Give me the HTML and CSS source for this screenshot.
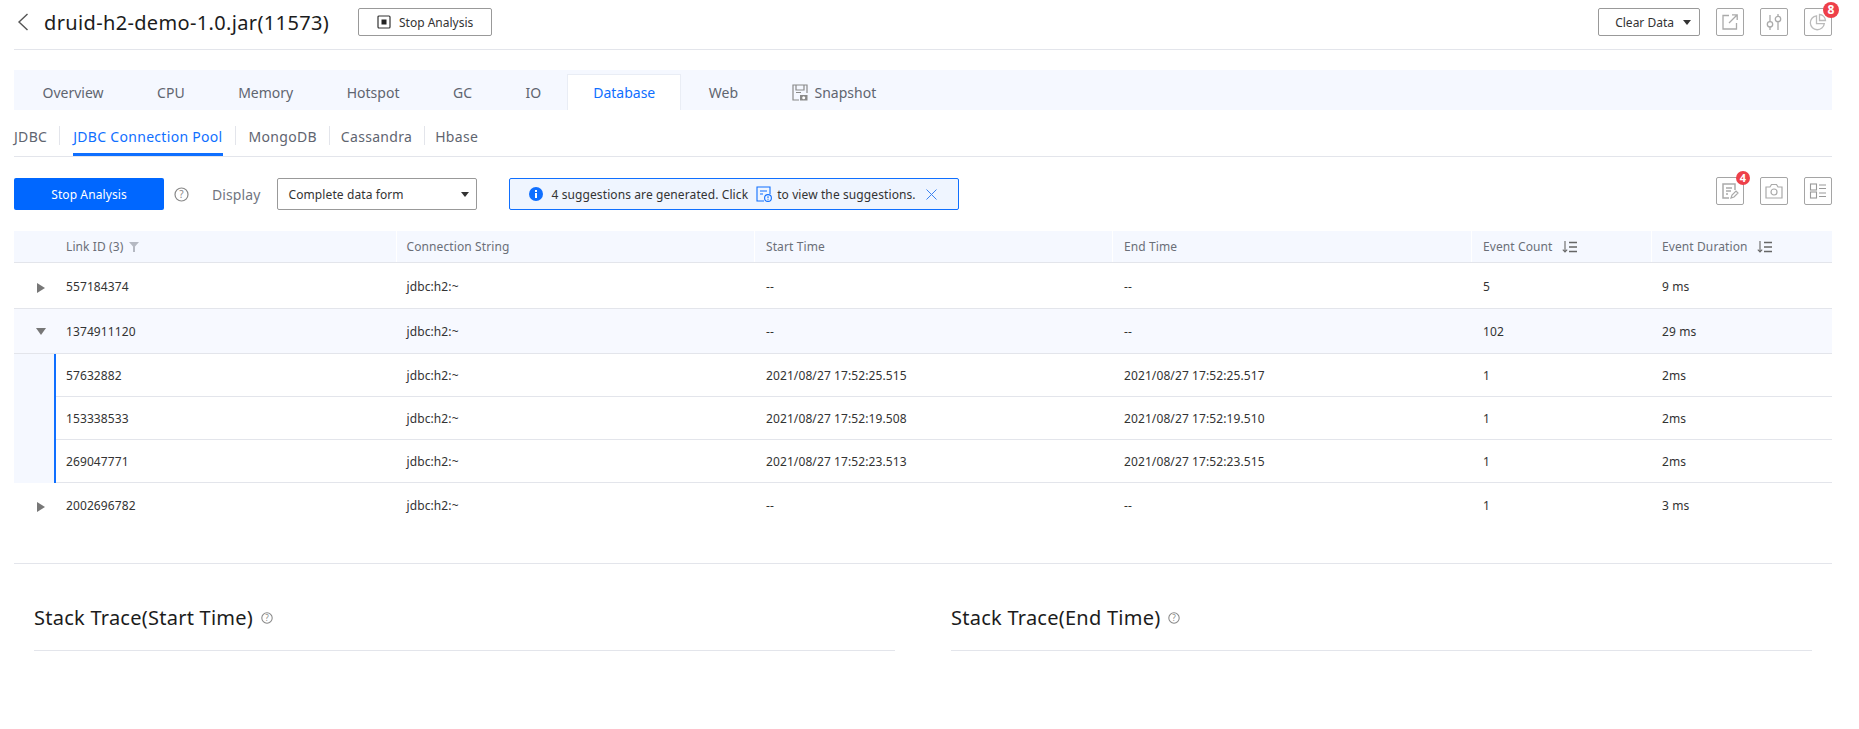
FILE: index.html
```html
<!DOCTYPE html>
<html>
<head>
    <title>druid-h2-demo-1.0.jar(11573)</title>
    <link rel="stylesheet" href="styles.css">
</head>
<body>
    <header class="page-head">
        <svg class="back" width="12" height="18" viewBox="0 0 12 18"><path d="M10.5 1 2 9l8.500 8" fill="none" stroke="#555" stroke-width="1.400"/></svg>
        <h1 class="title">druid-h2-demo-1.0.jar(11573)</h1>
        <button class="btn stop-top">
            <svg width="14" height="14" viewBox="0 0 14 14"><rect x="1" y="1" width="12" height="12" rx="1" fill="none" stroke="#333" stroke-width="1.200"/><rect x="4.500" y="4.500" width="5" height="5" fill="#222"/></svg>
            Stop Analysis
        </button>
        <div class="head-right">
            <button class="btn clear">Clear Data <span class="caret"></span></button>
            <span class="icon-btn">
                <svg width="20" height="20" viewBox="0 0 20 20" fill="none" stroke="#aaa" stroke-width="1.300"><path d="M9 3.500H3v13.500h13.500v-6"/><path d="M9 11 17 3M12 2.800h5.200V8"/></svg>
            </span>
            <span class="icon-btn">
                <svg width="20" height="20" viewBox="0 0 20 20" fill="none" stroke="#aaa" stroke-width="1.300"><path d="M6 3v6.500M6 15v3M14 2v2M14 10v8"/><circle cx="6" cy="12.300" r="2.700"/><circle cx="14" cy="7" r="2.700"/></svg>
            </span>
            <span class="icon-btn">
                <svg width="20" height="20" viewBox="0 0 20 20" fill="none" stroke="#bbb" stroke-width="1.300"><path d="M8.500 3.800a7 7 0 1 0 7.800 7.800H8.500z"/><path d="M11.500 2.500a6.500 6.500 0 0 1 6 6h-6z"/></svg>
                <span class="badge big">8</span>
            </span>
        </div>
    </header>

    <nav class="tabs">
        <a class="tab">Overview</a>
        <a class="tab">CPU</a>
        <a class="tab">Memory</a>
        <a class="tab">Hotspot</a>
        <a class="tab">GC</a>
        <a class="tab">IO</a>
        <a class="tab active">Database</a>
        <a class="tab">Web</a>
        <a class="tab snapshot">
            <svg width="16" height="17" viewBox="0 0 16 17" fill="none" stroke="#8a8a8a" stroke-width="1.200"><path d="M7 16H1V1h14v8"/><path d="M4 1v5h8V1M4 8.500h5"/><rect x="8" y="11" width="7.500" height="5.500" fill="#8a8a8a" stroke="none"/><circle cx="11.700" cy="13.700" r="1.500" fill="#fff" stroke="none"/></svg>
            Snapshot
        </a>
    </nav>

    <nav class="subtabs">
        <a class="subtab">JDBC</a>
        <a class="subtab active">JDBC Connection Pool</a>
        <a class="subtab">MongoDB</a>
        <a class="subtab">Cassandra</a>
        <a class="subtab">Hbase</a>
    </nav>

    <div class="toolbar">
        <button class="btn-primary">Stop Analysis</button>
        <svg class="help" width="15" height="15" viewBox="0 0 15 15"><circle cx="7.500" cy="7.500" r="6.500" fill="none" stroke="#888" stroke-width="1.200"/><text x="7.500" y="11" text-anchor="middle" class="help-mark">?</text></svg>
        <span class="display-label">Display</span>
        <div class="select">Complete data form <span class="caret"></span></div>
        <div class="alert">
            <svg width="14" height="14" viewBox="0 0 14 14"><circle cx="7" cy="7" r="7" fill="#0f6fff"/><rect x="6" y="6" width="2" height="5" fill="#fff"/><rect x="6" y="3" width="2" height="2" fill="#fff"/></svg>
            <span class="alert-lead">4 suggestions are generated. Click</span>
            <svg class="alert-icon" width="16" height="16" viewBox="0 0 16 16" fill="none" stroke="#0f6fff" stroke-width="1.100"><path d="M8 15H1V1h13v7"/><path d="M4 5h7M4 8h3"/><circle cx="12" cy="12" r="3.400" fill="#eff5ff"/><path d="M12 10.300v2M12 13v.8"/></svg>
            <span>to view the suggestions.</span>
            <svg class="alert-close" width="11" height="11" viewBox="0 0 11 11" fill="none" stroke="#3b82f0" stroke-width="1"><path d="M.5.500l10 10M10.500.500l-10 10"/></svg>
        </div>
        <div class="tool-right">
            <span class="icon-btn">
                <svg width="20" height="20" viewBox="0 0 20 20" fill="none" stroke="#aaa" stroke-width="1.500"><path d="M9 17H3V3h12v6"/><path d="M6 7h6M6 10h5M6 13h2"/><path d="M11 17l1-3 4-4 2 2-4 4z" stroke-width="1.200"/></svg>
                <span class="badge">4</span>
            </span>
            <span class="icon-btn">
                <svg width="20" height="20" viewBox="0 0 20 20" fill="none" stroke="#aaa" stroke-width="1.200"><path d="M2 6h4l1.500-2.500h5L14 6h4v11H2z"/><circle cx="10" cy="11" r="3"/></svg>
            </span>
            <span class="icon-btn">
                <svg width="20" height="20" viewBox="0 0 20 20" fill="none" stroke="#999" stroke-width="1.100"><rect x="2.500" y="3" width="6" height="6"/><rect x="2.500" y="11" width="6" height="6"/><path d="M11 4h7M11 7.500h7M11 12h7M11 15.500h7"/></svg>
            </span>
        </div>
    </div>

    <div class="table">
        <div class="row head">
            <div class="cell first">Link ID (3)
                <svg class="filter" width="10" height="10" viewBox="0 0 10 10"><path d="M0 0h10L6 4.500V10H4V4.500z" fill="#b5b9c2"/></svg>
            </div>
            <div class="cell">Connection String</div>
            <div class="cell">Start Time</div>
            <div class="cell">End Time</div>
            <div class="cell">Event Count
                <svg class="sort" width="15" height="12" viewBox="0 0 15 12" fill="none" stroke="#666" stroke-width="1.500"><path d="M3 0v11M.8 8.600 3 11l2.200-2.400" stroke-width="1.100"/><path d="M7 1.500h8M7 6h8M7 10.500h8"/></svg>
            </div>
            <div class="cell">Event Duration
                <svg class="sort" width="15" height="12" viewBox="0 0 15 12" fill="none" stroke="#666" stroke-width="1.500"><path d="M3 0v11M.8 8.600 3 11l2.200-2.400" stroke-width="1.100"/><path d="M7 1.500h8M7 6h8M7 10.500h8"/></svg>
            </div>
        </div>

        <div class="row item top-row">
            <div class="cell first"><span class="arrow right"></span>557184374</div>
            <div class="cell">jdbc:h2:~</div>
            <div class="cell">--</div>
            <div class="cell">--</div>
            <div class="cell">5</div>
            <div class="cell">9 ms</div>
        </div>
        <div class="row item open">
            <div class="cell first"><span class="arrow down"></span>1374911120</div>
            <div class="cell">jdbc:h2:~</div>
            <div class="cell">--</div>
            <div class="cell">--</div>
            <div class="cell">102</div>
            <div class="cell">29 ms</div>
        </div>

        <div class="children">
            <div class="child-rows">
                <div class="row child">
                    <div class="cell">57632882</div>
                    <div class="cell">jdbc:h2:~</div>
                    <div class="cell">2021/08/27 17:52:25.515</div>
                    <div class="cell">2021/08/27 17:52:25.517</div>
                    <div class="cell">1</div>
                    <div class="cell">2ms</div>
                </div>
                <div class="row child">
                    <div class="cell">153338533</div>
                    <div class="cell">jdbc:h2:~</div>
                    <div class="cell">2021/08/27 17:52:19.508</div>
                    <div class="cell">2021/08/27 17:52:19.510</div>
                    <div class="cell">1</div>
                    <div class="cell">2ms</div>
                </div>
                <div class="row child">
                    <div class="cell">269047771</div>
                    <div class="cell">jdbc:h2:~</div>
                    <div class="cell">2021/08/27 17:52:23.513</div>
                    <div class="cell">2021/08/27 17:52:23.515</div>
                    <div class="cell">1</div>
                    <div class="cell">2ms</div>
                </div>
            </div>
        </div>

        <div class="row item last">
            <div class="cell first"><span class="arrow right"></span>2002696782</div>
            <div class="cell">jdbc:h2:~</div>
            <div class="cell">--</div>
            <div class="cell">--</div>
            <div class="cell">1</div>
            <div class="cell">3 ms</div>
        </div>
    </div>

    <div class="stacks">
        <section class="stack">
            <h2>Stack Trace(Start Time)
                <svg width="12" height="12" viewBox="0 0 15 15"><circle cx="7.500" cy="7.500" r="6.500" fill="none" stroke="#888" stroke-width="1.300"/><text x="7.500" y="11" text-anchor="middle" class="help-mark">?</text></svg>
            </h2>
        </section>
        <section class="stack">
            <h2>Stack Trace(End Time)
                <svg width="12" height="12" viewBox="0 0 15 15"><circle cx="7.500" cy="7.500" r="6.500" fill="none" stroke="#888" stroke-width="1.300"/><text x="7.500" y="11" text-anchor="middle" class="help-mark">?</text></svg>
            </h2>
        </section>
    </div>
</body>
</html>
```

FILE: styles.css
```css
body {
    margin: 0;
    padding: 0 27px 0 14px;
    font-family: "Noto Sans", "Open Sans", sans-serif;
    font-size: 12px;
    color: #333;
    background: #fff;
}

button {
    font-family: inherit;
}

.page-head {
    display: flex;
    align-items: center;
    height: 50px;
    padding-bottom: 5px;
    box-sizing: border-box;
    border-bottom: 1px solid #e3e5eb;
}

.back {
    margin-left: 3px;
}

.title {
    margin: 0 0 0 15px;
    font-size: 20px;
    font-weight: 400;
    letter-spacing: 0.35px;
    color: #1c1c1c;
}

.btn {
    display: flex;
    align-items: center;
    height: 28px;
    padding: 0;
    border: 1px solid #999;
    border-radius: 2px;
    background: #fff;
    font-size: 12px;
    color: #333;
}

.stop-top {
    justify-content: center;
    gap: 8px;
    width: 134px;
    margin-left: 29px;
}

.head-right {
    display: flex;
    align-items: center;
    gap: 16px;
    margin-left: auto;
}

.clear {
    justify-content: flex-end;
    gap: 9px;
    width: 102px;
    padding-right: 8px;
    box-sizing: border-box;
}

.caret {
    width: 0;
    height: 0;
    border-left: 4px solid transparent;
    border-right: 4px solid transparent;
    border-top: 5px solid #333;
}

.icon-btn {
    position: relative;
    display: flex;
    align-items: center;
    justify-content: center;
    width: 28px;
    height: 28px;
    box-sizing: border-box;
    border: 1px solid #a5a5a5;
    border-radius: 2px;
}

.badge {
    position: absolute;
    top: -7px;
    right: -7px;
    width: 14px;
    height: 14px;
    border-radius: 50%;
    background: #ee4049;
    color: #fff;
    font-size: 11px;
    font-weight: 700;
    line-height: 14px;
    text-align: center;
}

.badge.big {
    width: 16px;
    height: 16px;
    line-height: 16px;
    font-size: 12px;
    right: -8px;
}

.tabs {
    display: flex;
    align-items: flex-end;
    height: 40px;
    margin-top: 20px;
    padding-left: 1px;
    background: #f5f8ff;
}

.tab {
    display: flex;
    align-items: center;
    height: 36px;
    padding: 0 26px 0 27.5px;
    box-sizing: border-box;
    font-size: 14px;
    color: #5f6570;
}

.tab.snapshot {
    gap: 7px;
}

.tab.active {
    background: #fff;
    border: 1px solid #e9edf5;
    border-bottom: none;
    color: #0f6fff;
    padding: 0 25px;
}

.subtabs {
    display: flex;
    align-items: flex-end;
    height: 47px;
    box-sizing: border-box;
    border-bottom: 1px solid #e3e5eb;
}

.subtab {
    position: relative;
    height: 37px;
    margin-right: 25px;
    box-sizing: border-box;
    padding-top: 8px;
    font-size: 14px;
    letter-spacing: 0.3px;
    line-height: 19px;
    color: #5f6570;
}

.subtab:first-child {
    margin-right: 26px;
}

.subtab:nth-child(3) {
    margin-right: 24px;
}

.subtab:nth-child(4) {
    margin-right: 23px;
}

.subtab::after {
    content: "";
    position: absolute;
    top: 7px;
    right: -13px;
    width: 1px;
    height: 19px;
    background: #e3e5eb;
}

.subtab:last-child::after {
    display: none;
}

.subtab.active {
    color: #0f6fff;
    border-bottom: 3px solid #0f6fff;
    margin-right: 26px;
}

.toolbar {
    display: flex;
    align-items: center;
    height: 32px;
    margin-top: 21px;
    letter-spacing: 0.1px;
}

.btn-primary {
    width: 150px;
    height: 32px;
    border: none;
    border-radius: 2px;
    background: #0067ff;
    color: #fff;
    font-size: 12px;
    letter-spacing: 0.1px;
}

.help {
    margin-left: 10px;
}

.help-mark {
    font-size: 10px;
    fill: #888;
    font-family: "Noto Sans", sans-serif;
}

.display-label {
    margin-left: 23px;
    font-size: 14px;
    color: #72767f;
}

.select {
    display: flex;
    align-items: center;
    justify-content: space-between;
    width: 200px;
    height: 32px;
    margin-left: 17px;
    padding: 0 7px 0 10px;
    box-sizing: border-box;
    border: 1px solid #999;
    border-radius: 2px;
    color: #333;
}

.alert {
    display: flex;
    align-items: center;
    width: 450px;
    height: 32px;
    margin-left: 32px;
    padding-left: 19px;
    box-sizing: border-box;
    border: 1px solid #0f6fff;
    border-radius: 2px;
    background: #eff5ff;
    color: #333;
}

.alert-lead {
    margin-left: 8px;
}

.alert-icon {
    margin: 0 5px 0 8px;
}

.alert-close {
    margin-left: 10px;
}

.tool-right {
    display: flex;
    gap: 16px;
    margin-left: auto;
    align-self: flex-start;
    margin-top: -1px;
}

.table {
    margin-top: 21px;
    letter-spacing: 0.1px;
}

.row {
    display: grid;
    grid-template-columns: 383px 358px 358px 359px 180px 180px;
    align-items: center;
    box-sizing: border-box;
    border-bottom: 1px solid #e3e5eb;
}

.cell {
    display: flex;
    align-items: center;
    height: 100%;
    padding-left: 9.5px;
    box-sizing: border-box;
}

.cell:nth-child(n+3) {
    padding-left: 11px;
}

.cell:last-child {
    padding-left: 10px;
}

.cell.first {
    position: relative;
    padding-left: 52px;
}

.row.head {
    height: 32px;
    background: #f5f8ff;
    color: #6b6f78;
}

.row.head .cell {
    border-right: 1px solid #fff;
}

.row.head .cell:last-child {
    border-right: none;
}

.row.item {
    height: 46px;
}

.row.top-row {
    padding-top: 2px;
}

.row.open {
    height: 45px;
    background: #f7f9ff;
}

.row.last {
    height: 45px;
    border-bottom: none;
}

.arrow {
    position: absolute;
    left: 23px;
    top: 50%;
    width: 0;
    height: 0;
}

.arrow.right {
    margin-top: -4px;
    border-top: 5px solid transparent;
    border-bottom: 5px solid transparent;
    border-left: 8px solid #777;
}

.arrow.down {
    margin-top: -3px;
    margin-left: -1px;
    border-left: 5px solid transparent;
    border-right: 5px solid transparent;
    border-top: 7px solid #777;
}

.filter {
    margin-left: 6px;
}

.sort {
    margin-left: 9px;
}

.children {
    padding-left: 40px;
    background: #f5f8ff;
}

.child-rows {
    border-left: 2px solid #0f6fff;
    background: #fff;
}

.row.child {
    height: 43px;
    grid-template-columns: 341px 358px 358px 359px 180px 180px;
}

.row.child .cell:first-child {
    padding-left: 10px;
}

.stacks {
    display: flex;
    gap: 56px;
    margin-top: 35px;
    padding: 0 20px;
    border-top: 1px solid #e3e5eb;
}

.stack {
    flex: 1;
    height: 87px;
    box-sizing: border-box;
    border-bottom: 1px solid #e3e5eb;
}

.stack h2 {
    display: flex;
    align-items: center;
    gap: 8px;
    margin: 42px 0 0;
    font-size: 20px;
    letter-spacing: 0.25px;
    line-height: 24px;
    font-weight: 400;
    color: #1c1c1c;
}
```
